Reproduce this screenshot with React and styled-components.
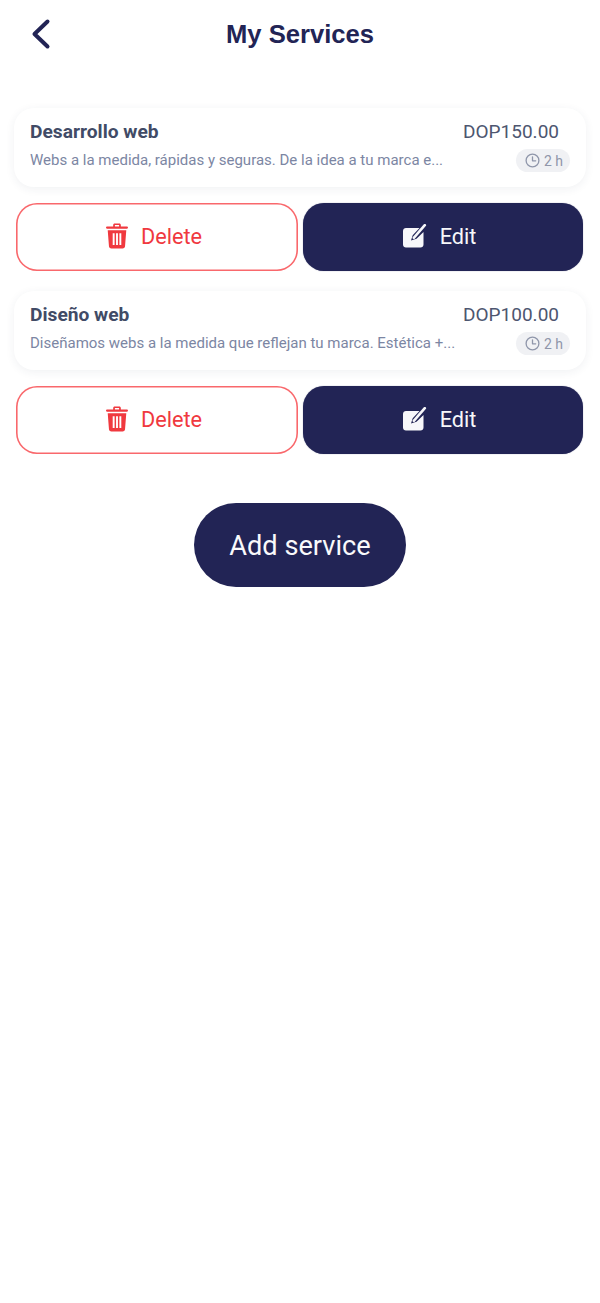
import React from "react";
import styled, { createGlobalStyle } from "styled-components";

const Global = createGlobalStyle`
  html, body { margin: 0; padding: 0; background: #fff; }
  body { font-family: Roboto, "Liberation Sans", sans-serif; }
`;

const Page = styled.div`
  width: 600px;
  height: 1303px;
  background: #fff;
  display: flex;
  flex-direction: column;
  overflow: hidden;
`;

const Header = styled.header`
  height: 108px;
  padding: 18px 0 0 31px;
  box-sizing: border-box;
  display: grid;
  grid-template-columns: 20px 1fr 51px;
  align-items: start;
`;

const BackButton = styled.div`
  width: 20px;
  height: 32px;
  display: flex;
`;

const Title = styled.h1`
  margin: 0;
  font-family: "Liberation Sans", Arial, sans-serif;
  font-weight: 700;
  font-size: 25.6px;
  line-height: 33px;
  color: #222455;
  text-align: center;
`;

const List = styled.div`
  display: flex;
  flex-direction: column;
  padding: 0 14px;
`;

const Card = styled.div`
  height: 79px;
  box-sizing: border-box;
  background: #fff;
  border-radius: 20px;
  box-shadow: 0 2px 10px rgba(40, 50, 90, 0.07);
  padding: 11px 16px 0;
  display: grid;
  grid-template-columns: 1fr auto;
  grid-template-rows: 26px 31px;
`;

const Name = styled.div`
  font-weight: 700;
  font-size: 19.2px;
  line-height: 26px;
  color: #414b66;
`;

const Price = styled.div`
  font-size: 19px;
  line-height: 26px;
  color: #4d5670;
  padding-right: 11px;
  text-align: right;
`;

const Desc = styled.div`
  font-size: 15px;
  line-height: 31px;
  color: #7c86a3;
  white-space: nowrap;
`;

const Duration = styled.div`
  justify-self: end;
  align-self: center;
  height: 23px;
  box-sizing: border-box;
  padding: 0 7px 0 9px;
  border-radius: 12px;
  background: #f0f1f4;
  display: flex;
  align-items: center;
  gap: 4px;
  font-size: 14px;
  color: #8f96aa;
`;

const Actions = styled.div`
  display: grid;
  grid-template-columns: 282px 280px;
  column-gap: 5px;
  padding: 16px 2px 20px;
`;

const ActionButton = styled.div`
  height: 68px;
  box-sizing: border-box;
  border-radius: 21px;
  padding: 0 ${(p) => (p.$danger ? "6px" : "7px")} 2px 0;
  display: flex;
  align-items: center;
  justify-content: center;
  gap: 13px;
  font-size: 21.7px;
  color: ${(p) => (p.$danger ? "#f0393f" : "#f7f7fa")};
  background: ${(p) => (p.$danger ? "#fff" : "#222455")};
  box-shadow: ${(p) => (p.$danger ? "inset 0 0 0 1.600px #f9686c" : "0 0 1px rgba(34, 36, 85, 0.6)")};
`;

const Footer = styled.div`
  display: flex;
  justify-content: center;
  padding-top: 29px;
`;

const AddButton = styled.div`
  width: 212px;
  height: 84px;
  box-sizing: border-box;
  padding-top: 1px;
  border-radius: 42px;
  background: #222455;
  color: #f9f9fb;
  font-size: 27.2px;
  display: flex;
  align-items: center;
  justify-content: center;
`;

const Chevron = () => (
  <svg width="20" height="32" viewBox="0 0 20 32" fill="none">
    <path d="M16.5 3.5 L3.5 16 L16.5 28.500" stroke="#222455" strokeWidth="4" strokeLinecap="round" strokeLinejoin="round" />
  </svg>
);

const Trash = () => (
  <svg width="22" height="26" viewBox="0 0 23 26">
    <path
      fill="#f0393f"
      fillRule="evenodd"
      d="M7.500 1.500C7.500 .7 8.200 0 9 0h5c.8 0 1.500.7 1.500 1.500V3h6.100c.8 0 1.400.5 1.400 1.200s-.6 1.300-1.400 1.300H1.400C.6 5.500 0 4.900 0 4.200S.6 3 1.400 3h6.100V1.500ZM9.300 1.600V3h4.400V1.600H9.300ZM1.800 7h19.400l-1.300 16.600c-.1 1.300-1.100 2.400-2.500 2.400H5.600c-1.400 0-2.400-1.100-2.500-2.400L1.800 7ZM7 10v12.500h2V10H7ZM10.500 10v12.500h2V10h-2ZM14 10v12.500h2V10h-2Z"
    />
  </svg>
);

const EditIcon = () => (
  <svg width="24" height="25" viewBox="0 0 24 25">
    <path
      fill="#f7f7fa"
      d="M3 4h13.500l-6.800 7.200-1.700 5.400 5.500-1.800L20.500 8v12.500c0 1.700-1.300 3-3 3H3c-1.700 0-3-1.300-3-3V7c0-1.700 1.300-3 3-3Z"
    />
    <path d="M10.800 13.800 21.800 1.200" stroke="#f7f7fa" strokeWidth="2.600" strokeLinecap="round" />
  </svg>
);

const Clock = () => (
  <svg width="15" height="15" viewBox="0 0 15 15" fill="none" stroke="#8f96aa" strokeWidth="1.300">
    <circle cx="7.500" cy="7.500" r="6.400" />
    <path d="M7.500 3.800v4h3.200" strokeLinecap="round" strokeLinejoin="round" />
  </svg>
);

const services = [
  { name: "Desarrollo web", price: "DOP150.00", desc: "Webs a la medida, rápidas y seguras. De la idea a tu marca e..." },
  { name: "Diseño web", price: "DOP100.00", desc: "Diseñamos webs a la medida que reflejan tu marca. Estética +..." },
];

export default function App() {
  return (
    <Page>
      <Global />
      <Header>
        <BackButton><Chevron /></BackButton>
        <Title>My Services</Title>
      </Header>
      <List>
        {services.map((s) => (
          <React.Fragment key={s.name}>
            <Card>
              <Name>{s.name}</Name>
              <Price>{s.price}</Price>
              <Desc>{s.desc}</Desc>
              <Duration><Clock />2 h</Duration>
            </Card>
            <Actions>
              <ActionButton $danger><Trash />Delete</ActionButton>
              <ActionButton><EditIcon />Edit</ActionButton>
            </Actions>
          </React.Fragment>
        ))}
      </List>
      <Footer>
        <AddButton>Add service</AddButton>
      </Footer>
    </Page>
  );
}
